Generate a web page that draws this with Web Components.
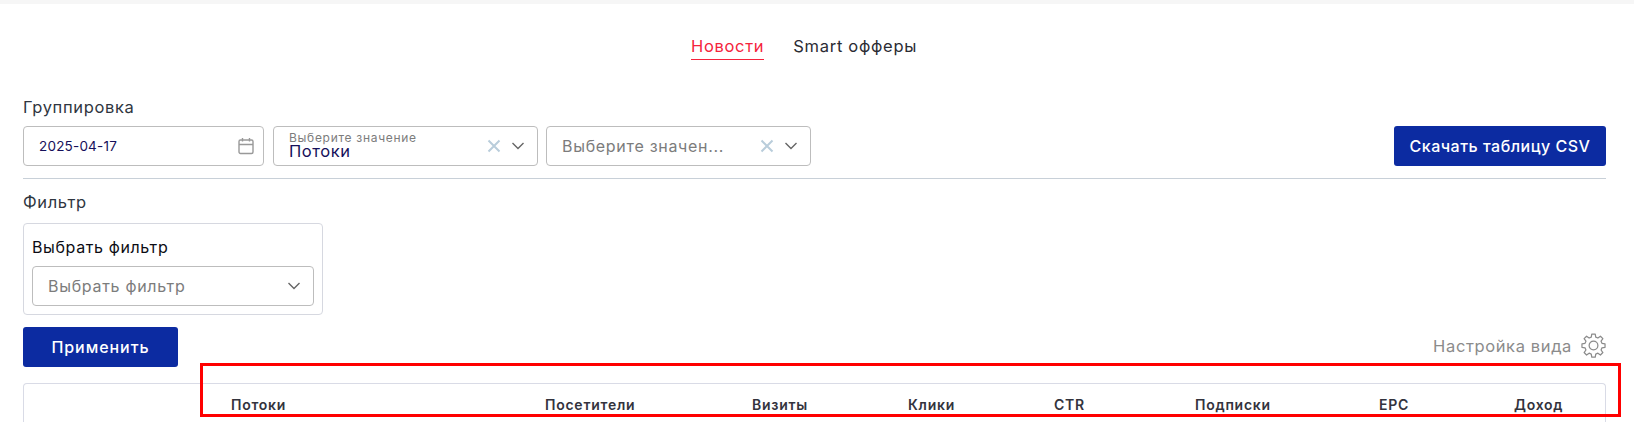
<!DOCTYPE html>
<html lang="ru">
<head>
<meta charset="utf-8">
<title>Статистика</title>
<style>
    html, body { margin: 0; background: #fff; height: 422px; overflow: hidden; }
    body { font-family: "Inter", "Noto Sans", sans-serif; color: #2b2b33; }
</style>
</head>
<body>
<report-page></report-page>

<script>
const chevron = `<svg width="14" height="8" viewBox="0 0 14 8" fill="none" stroke="#666" stroke-width="1.4"><path d="M1.5 1L7 6.5 12.5 1"/></svg>`;
const cross = `<svg width="14" height="14" viewBox="0 0 14 14" fill="none" stroke="#b9cddb" stroke-width="2"><path d="M1.5 1.5l11 11M12.5 1.5l-11 11"/></svg>`;

class TabBar extends HTMLElement {
    constructor() {
        super();
        this.attachShadow({ mode: 'open' });
        this.shadowRoot.innerHTML = `
            <style>
                :host { display: flex; justify-content: center; gap: 29px; padding: 31px 21px 0 0; height: 57px; box-sizing: border-box; }
                span { font-size: 16.5px; line-height: 22px; height: 24px; letter-spacing: .7px; color: #2b2b33; }
                .active { color: #f5233c; border-bottom: 1px solid #f5233c; }
            </style>
            <span class="active">Новости</span>
            <span>Smart офферы</span>
        `;
    }
}

class AppButton extends HTMLElement {
    constructor() {
        super();
        this.attachShadow({ mode: 'open' });
        const spacing = this.getAttribute('spacing') || '.5px';
        this.shadowRoot.innerHTML = `
            <style>
                :host { display: flex; align-items: center; justify-content: center; height: 40px; box-sizing: border-box; background: #0c2ba1; color: #fff; border-radius: 3px; font-size: 16px; font-weight: 500; letter-spacing: ${spacing}; }
            </style>
            <slot></slot>
        `;
    }
}

class DateField extends HTMLElement {
    constructor() {
        super();
        this.attachShadow({ mode: 'open' });
        this.shadowRoot.innerHTML = `
            <style>
                :host { display: flex; align-items: center; justify-content: space-between; width: 241px; height: 40px; box-sizing: border-box; border: 1px solid #bdbdbd; border-radius: 4px; padding: 0 9px 0 15px; font-size: 13.5px; letter-spacing: .2px; color: #16105a; }
                svg { display: block; }
            </style>
            <slot></slot>
            <svg width="16" height="18" viewBox="0 0 16 18" fill="none" stroke="#999" stroke-width="1.4"><rect x="1" y="3" width="14" height="13.5" rx="1.5"/><path d="M1 7.5h14M4.5 1v3.5M11.5 1v3.5"/></svg>
        `;
    }
}

class SelectField extends HTMLElement {
    constructor() {
        super();
        this.attachShadow({ mode: 'open' });
        const label = this.getAttribute('label');
        const value = this.getAttribute('value');
        const placeholder = this.getAttribute('placeholder');
        const clearable = this.hasAttribute('clearable');
        this.shadowRoot.innerHTML = `
            <style>
                :host { display: flex; align-items: center; height: 40px; box-sizing: border-box; border: 1px solid #bdbdbd; border-radius: 4px; padding: 0 12px 0 15px; background: #fff; }
                .text { flex: 1; min-width: 0; }
                .label { font-size: 12px; line-height: 11px; color: #7c7c7c; letter-spacing: .7px; margin-top: -2px; }
                .value { font-size: 16.5px; line-height: 16px; color: #16105a; letter-spacing: .55px; }
                .placeholder { font-size: 16px; color: #7c7c7c; letter-spacing: .7px; white-space: nowrap; }
                .cross { margin-right: 10px; display: flex; }
                .chev { display: flex; }
            </style>
            <div class="text">
                ${label ? `<div class="label">${label}</div><div class="value">${value}</div>` : `<div class="placeholder">${placeholder}</div>`}
            </div>
            ${clearable ? `<span class="cross">${cross}</span>` : ''}
            <span class="chev">${chevron}</span>
        `;
    }
}

class FilterCard extends HTMLElement {
    constructor() {
        super();
        this.attachShadow({ mode: 'open' });
        this.shadowRoot.innerHTML = `
            <style>
                :host { display: block; width: 300px; height: 92px; box-sizing: border-box; border: 1px solid #d6d8e0; border-radius: 4px; padding: 13px 8px 0 8px; }
                .title { font-size: 16px; line-height: 20px; color: #0c0c14; letter-spacing: .62px; margin-bottom: 9px; }
                select-field { width: 100%; }
            </style>
            <div class="title">Выбрать фильтр</div>
            <select-field placeholder="Выбрать фильтр"></select-field>
        `;
    }
}

class TableHead extends HTMLElement {
    constructor() {
        super();
        this.attachShadow({ mode: 'open' });
        const cols = ['Потоки', 'Посетители', 'Визиты', 'Клики', 'CTR', 'Подписки', 'EPC', 'Доход'];
        this.shadowRoot.innerHTML = `
            <style>
                :host { display: block; height: 60px; box-sizing: border-box; border: 1px solid #d9dbe6; border-bottom: 0; border-radius: 4px 4px 0 0; padding: 13px 0 0 207px; }
                .row { display: grid; grid-template-columns: 314px 207px 156px 146px 141px 184px 135px auto; }
                span { font-size: 14px; line-height: 16px; font-weight: 600; color: #33333d; letter-spacing: .75px; }
            </style>
            <div class="row">${cols.map(c => `<span>${c}</span>`).join('')}</div>
        `;
    }
}

class ReportPage extends HTMLElement {
    constructor() {
        super();
        this.attachShadow({ mode: 'open' });
        this.shadowRoot.innerHTML = `
            <style>
                :host { display: block; position: relative; height: 422px; overflow: hidden; border-top: 4px solid #f6f6f6; box-sizing: border-box; }
                main { padding: 0 28px 0 23px; }
                .heading { font-size: 16.5px; line-height: 20px; color: #2f3640; letter-spacing: .65px; }
                .group { margin-top: 36px; }
                .controls { display: flex; gap: 9px; margin-top: 9px; padding-bottom: 12px; border-bottom: 1px solid #c8d0d8; }
                .controls select-field { width: 265px; }
                .controls select-field + select-field { margin-left: -1px; }
                .csv { width: 212px; margin-left: auto; }
                .filter { margin-top: 13px; }
                filter-card { margin-top: 11px; }
                .actions { display: flex; justify-content: space-between; align-items: flex-start; margin-top: 12px; }
                .apply { width: 155px; }
                .view { display: flex; align-items: center; gap: 9px; color: #8b8b8b; font-size: 16.5px; letter-spacing: .62px; margin-top: 6px; }
                table-head { margin-top: 16px; }
                /* red mark laid over the table head */
                .mark { position: absolute; left: 200px; top: 359px; width: 1421px; height: 54px; box-sizing: border-box; border: 3px solid #f00; }
            </style>
            <main>
                <tab-bar></tab-bar>
                <div class="heading group">Группировка</div>
                <div class="controls">
                    <date-field>2025-04-17</date-field>
                    <select-field label="Выберите значение" value="Потоки" clearable></select-field>
                    <select-field placeholder="Выберите значен..." clearable></select-field>
                    <app-button class="csv">Скачать таблицу CSV</app-button>
                </div>
                <div class="heading filter">Фильтр</div>
                <filter-card></filter-card>
                <div class="actions">
                    <app-button class="apply" spacing=".95px">Применить</app-button>
                    <div class="view">Настройка вида
                        <svg width="25" height="25" viewBox="0 0 24 24" fill="none" stroke="#8b8b8b" stroke-width="1.2" stroke-linejoin="round"><circle cx="12" cy="12" r="4.2"/><path d="M10.3 1.8h3.4l.5 3 2.1.9 2.5-1.8 2.4 2.4-1.8 2.5.9 2.1 3 .5v3.4l-3 .5-.9 2.1 1.8 2.5-2.4 2.4-2.5-1.8-2.1.9-.5 3h-3.4l-.5-3-2.1-.9-2.5 1.8-2.4-2.4 1.8-2.5-.9-2.1-3-.5v-3.4l3-.5.9-2.1-1.8-2.5 2.4-2.4 2.5 1.8 2.1-.9z" transform="translate(12 12) scale(.98) translate(-12 -13)"/></svg>
                    </div>
                </div>
                <table-head></table-head>
            </main>
            <div class="mark"></div>
        `;
    }
}

customElements.define('tab-bar', TabBar);
customElements.define('app-button', AppButton);
customElements.define('date-field', DateField);
customElements.define('select-field', SelectField);
customElements.define('filter-card', FilterCard);
customElements.define('table-head', TableHead);
customElements.define('report-page', ReportPage);
</script>
</body>
</html>
